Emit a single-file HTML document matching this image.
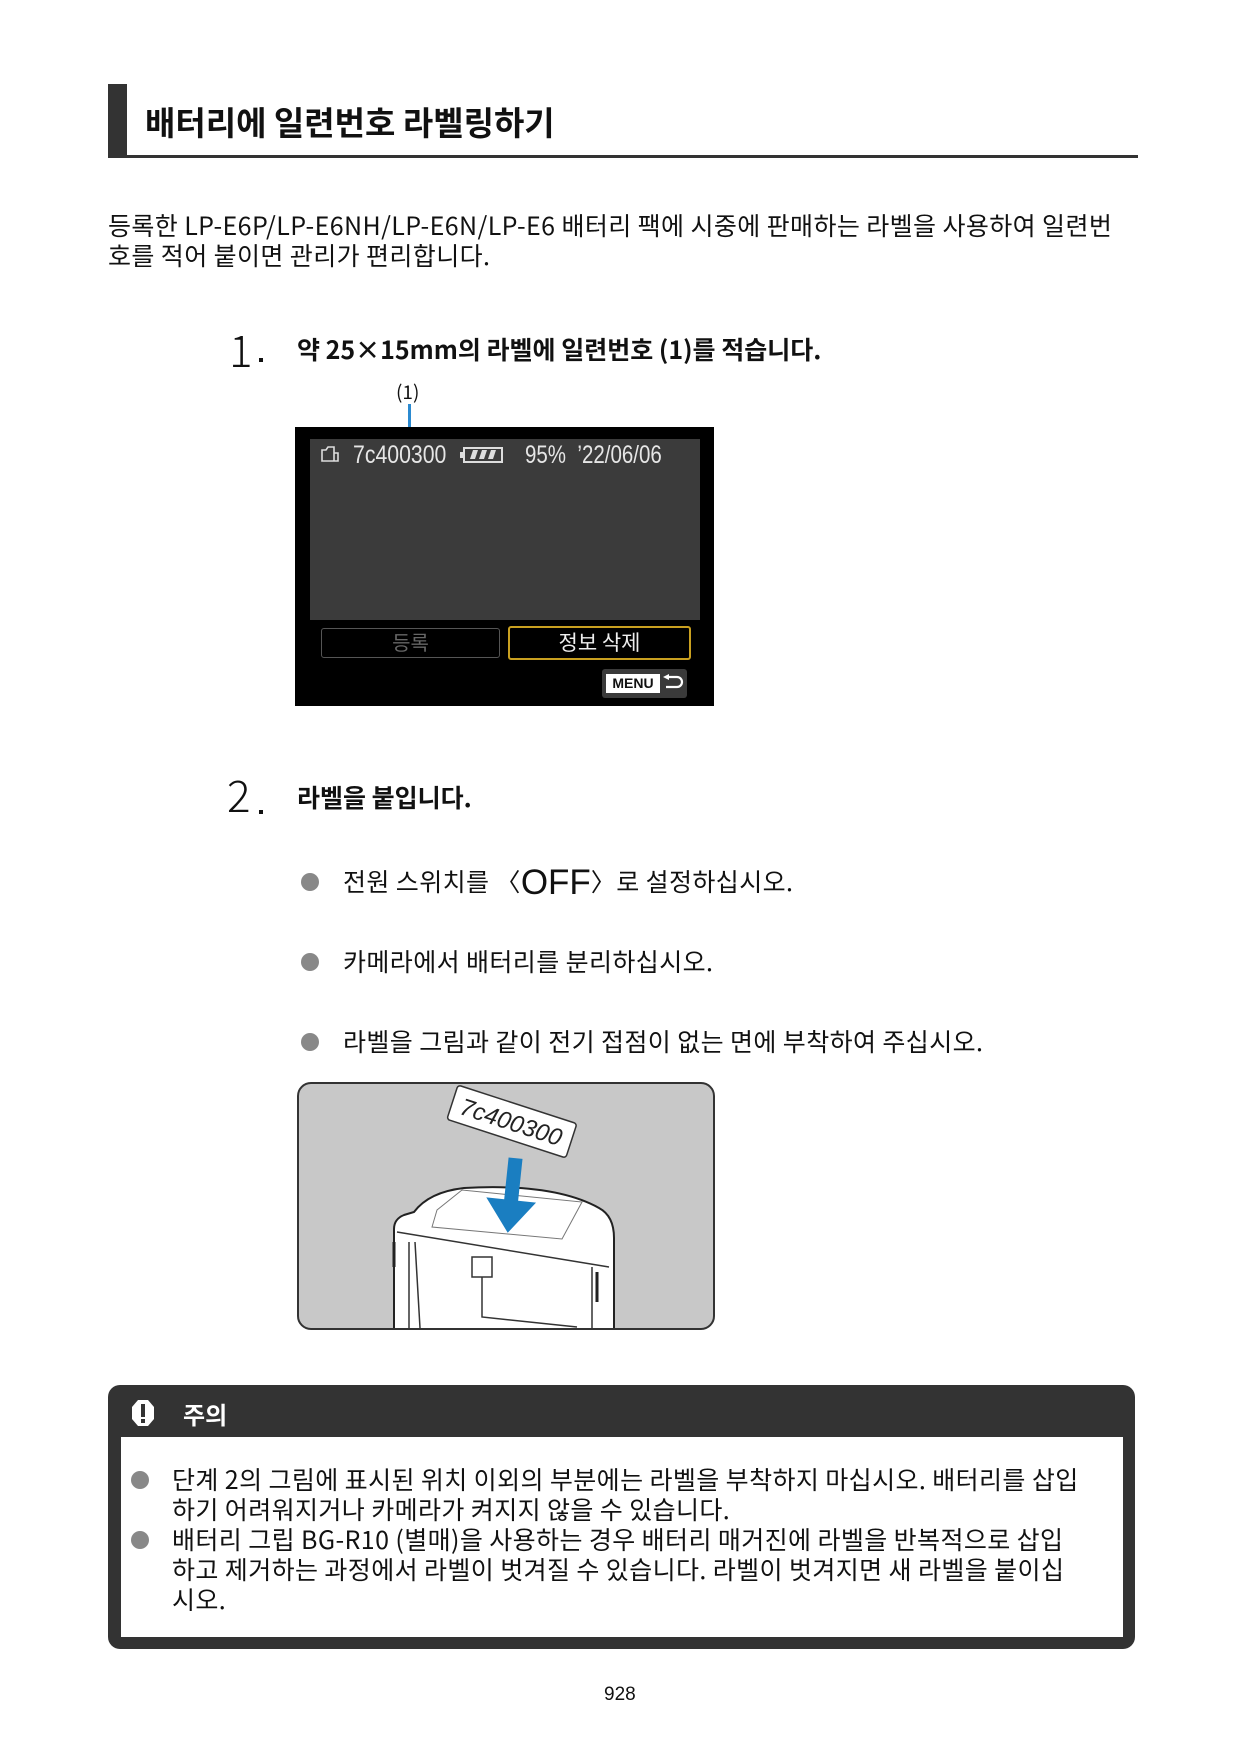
<!DOCTYPE html>
<html><head><meta charset="utf-8"><style>
*{margin:0;padding:0;box-sizing:border-box}
body{width:1241px;height:1749px;background:#fff;position:relative;font-family:"Liberation Sans","Noto Sans CJK KR",sans-serif;color:#111;overflow:hidden}
.a{position:absolute;white-space:nowrap}
.k{font-family:"Noto Sans CJK KR",sans-serif}
.dot{position:absolute;width:18px;height:18px;border-radius:50%;background:#888}
.t{font-size:25px;letter-spacing:0.4px}
</style></head><body>
<div class="a" style="left:108px;top:84px;width:19px;height:74px;background:#333"></div>
<div class="a" style="left:108px;top:155px;width:1030px;height:3px;background:#333"></div>
<div class="a k" style="left:145px;top:98px;font-size:33px;font-weight:700;line-height:46px">배터리에 일련번호 라벨링하기</div>

<div class="a k t" style="left:108px;top:210px;line-height:30px">등록한 LP-E6P/LP-E6NH/LP-E6N/LP-E6 배터리 팩에 시중에 판매하는 라벨을 사용하여 일련번<br>호를 적어 붙이면 관리가 편리합니다.</div>

<div class="a k" style="left:229px;top:320px;font-size:44px;font-weight:300;line-height:56px">1</div>
<div class="a" style="left:259px;top:358px;width:4px;height:4px;background:#111"></div>
<div class="a k" style="left:297px;top:333px;font-size:25px;font-weight:700;line-height:32px">약 25×15mm의 라벨에 일련번호 (1)를 적습니다.</div>

<div class="a k" style="left:396px;top:380px;font-size:19px;line-height:24px">(1)</div>
<div class="a" style="left:408px;top:404px;width:3px;height:38px;background:#2b8ad0"></div>
<div class="a" style="left:295px;top:427px;width:419px;height:279px;background:#000"></div>
<div class="a" style="left:310px;top:439px;width:390px;height:181px;background:#3b3b3b"></div>
<svg class="a" style="left:320px;top:445px" width="22" height="18" viewBox="0 0 22 18"><path d="M2 5h4l2-3h6v14H2z M14 8h4v8h-4" fill="none" stroke="#ddd" stroke-width="1.6"/></svg>
<div class="a" style="left:353px;top:439px;font-size:25px;color:#e6e6e6;line-height:32px;transform:scaleX(.85);transform-origin:left">7c400300</div>
<svg class="a" style="left:460px;top:446px" width="45" height="18" viewBox="0 0 45 18"><rect x="4" y="2" width="38" height="14" fill="none" stroke="#ddd" stroke-width="2"/><rect x="0" y="6" width="4" height="6" fill="#ddd"/><path d="M10 13l3-9h5l-3 9zM19 13l3-9h5l-3 9zM28 13l3-9h5l-3 9z" fill="#ddd"/></svg>
<div class="a" style="left:525px;top:439px;font-size:25px;color:#e6e6e6;line-height:32px;transform:scaleX(.82);transform-origin:left">95%&nbsp; ’22/06/06</div>
<div class="a k" style="left:321px;top:628px;width:179px;height:30px;border:1.5px solid #555;border-radius:3px;color:#666;font-size:20px;text-align:center;line-height:26px">등록</div>
<div class="a k" style="left:508px;top:626px;width:183px;height:34px;border:2px solid #c9a020;border-radius:3px;color:#eee;font-size:21px;text-align:center;line-height:29px">정보 삭제</div>
<div class="a" style="left:602px;top:669px;width:85px;height:29px;background:#3a3a3a;border-radius:3px"></div>
<div class="a" style="left:606px;top:674px;width:54px;height:19px;background:#fff;color:#111;font-size:14px;font-weight:700;text-align:center;line-height:19px">MENU</div>
<svg class="a" style="left:662px;top:673px" width="22" height="20" viewBox="0 0 22 20"><path d="M6 4h9a5 5 0 0 1 0 10H4" fill="none" stroke="#fff" stroke-width="2.2"/><path d="M1 4l6-3v6z" fill="#fff"/></svg>

<div class="a k" style="left:227px;top:765px;font-size:44px;font-weight:300;line-height:56px">2</div>
<div class="a" style="left:259px;top:810px;width:4px;height:4px;background:#111"></div>
<div class="a k" style="left:297px;top:781px;font-size:25px;font-weight:700;line-height:32px">라벨을 붙입니다.</div>

<div class="dot" style="left:301px;top:873px"></div>
<div class="a k t" style="left:343px;top:865px;line-height:32px">전원 스위치를 〈<span style="font-size:35px;font-family:'Liberation Sans',sans-serif;vertical-align:-3px;letter-spacing:0">OFF</span>〉로 설정하십시오.</div>
<div class="dot" style="left:301px;top:953px"></div>
<div class="a k t" style="left:343px;top:945px;line-height:32px">카메라에서 배터리를 분리하십시오.</div>
<div class="dot" style="left:301px;top:1033px"></div>
<div class="a k t" style="left:343px;top:1025px;line-height:32px">라벨을 그림과 같이 전기 접점이 없는 면에 부착하여 주십시오.</div>

<svg class="a" style="left:297px;top:1082px" width="418" height="248" viewBox="0 0 418 248">
<rect x="1" y="1" width="416" height="246" rx="13" fill="#c8c8c8" stroke="#333" stroke-width="2"/>
<path d="M97 246V147q0-10 10-14l10-3q15-20 50-24 q90-5 135 20 q15 8 15 30V246" fill="#fff" stroke="#222" stroke-width="2"/>
<path d="M140 128l25-20 120 12 -20 37 -130-12z" fill="#fff" stroke="#777" stroke-width="1"/>
<path d="M100 150l212 35M112 160V246M295 185V246M118 160l5 86M175 175h20v20h-20z M185 195v40l95 10" fill="none" stroke="#333" stroke-width="1.5"/>
<path d="M97 160v25M300 190v30" stroke="#222" stroke-width="3"/>
<path d="M208 76v42h-18l25 33 25-33h-18V76z" fill="#1a7ec1" transform="rotate(6 215 110)"/>
<g transform="rotate(18 210 40)"><rect x="152" y="20" width="125" height="36" rx="3" fill="#fff" stroke="#333" stroke-width="1.5"/><text x="214" y="47" font-family="Liberation Sans" font-style="italic" font-size="24" text-anchor="middle" fill="#222">7c400300</text></g>
</svg>

<div class="a" style="left:108px;top:1385px;width:1027px;height:264px;background:#333;border-radius:12px"></div>
<div class="a" style="left:121px;top:1437px;width:1002px;height:200px;background:#fff"></div>
<svg class="a" style="left:130px;top:1399px" width="26" height="28" viewBox="0 0 26 28"><path d="M8 1h10l6 7v12l-6 7H8l-6-7V8z" fill="#fff"/><rect x="11" y="5" width="4" height="13" fill="#333"/><rect x="11" y="20" width="4" height="4" fill="#333"/></svg>
<div class="a k" style="left:183px;top:1398px;font-size:24px;font-weight:700;color:#fff;line-height:32px">주의</div>
<div class="dot" style="left:131px;top:1471px"></div>
<div class="dot" style="left:131px;top:1531px"></div>
<div class="a k t" style="left:172px;top:1464px;line-height:30px">단계 2의 그림에 표시된 위치 이외의 부분에는 라벨을 부착하지 마십시오. 배터리를 삽입<br>하기 어려워지거나 카메라가 켜지지 않을 수 있습니다.<br>배터리 그립 BG-R10 (별매)을 사용하는 경우 배터리 매거진에 라벨을 반복적으로 삽입<br>하고 제거하는 과정에서 라벨이 벗겨질 수 있습니다. 라벨이 벗겨지면 새 라벨을 붙이십<br>시오.</div>

<div class="a" style="left:604px;top:1684px;font-size:19px;line-height:22px">928</div>
</body></html>
